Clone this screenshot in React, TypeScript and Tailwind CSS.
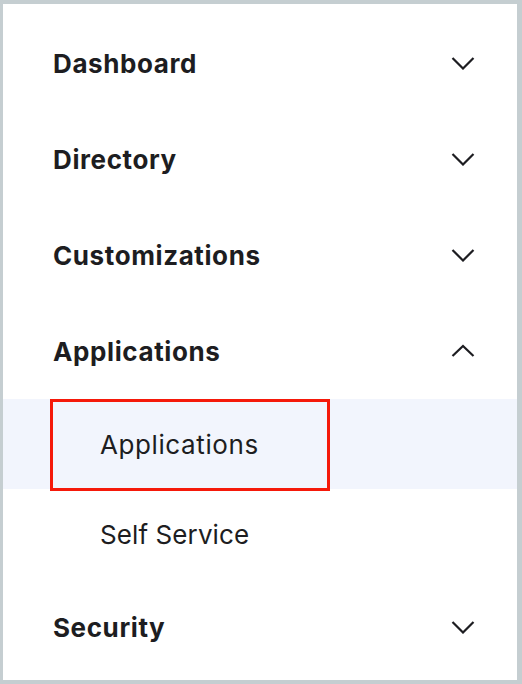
import React from "react";

const font = { fontFamily: "Inter, 'Noto Sans', sans-serif" };

function Chevron({ up = false }: { up?: boolean }) {
  return (
    <svg width="24" height="14" viewBox="0 0 24 14" fill="none" className="shrink-0">
      <polyline
        points={up ? "1.5,12 12,2 22.5,12" : "1.5,2 12,12.5 22.5,2"}
        stroke="#1d1d21"
        strokeWidth="2.2"
        strokeLinecap="butt"
        strokeLinejoin="miter"
      />
    </svg>
  );
}

function Section({ label, open = false }: { label: string; open?: boolean }) {
  return (
    <div className="flex h-[96px] items-center justify-between pl-[50px] pr-[42px]">
      <span className="text-[26px] font-bold tracking-[0.6px] text-[#1d1d21]">{label}</span>
      <Chevron up={open} />
    </div>
  );
}

export default function App() {
  return (
    <div style={font} className="h-[684px] w-[522px] bg-[#c5ced1] pt-[4px] pb-[4px] pl-[3px] pr-[5px]">
      <div className="h-full bg-white pt-[11px]">
        <Section label="Dashboard" />
        <Section label="Directory" />
        <Section label="Customizations" />
        <Section label="Applications" open />
        <div className="relative flex h-[90px] items-center bg-[#f2f5fd] pl-[97px]">
          <span className="text-[26px] tracking-[0.6px] text-[#1d1d21]">Applications</span>
          <div className="absolute left-[47px] top-0 h-[92px] w-[280px] border-[3px] border-[#f5190a]" />
        </div>
        <div className="flex h-[90px] items-center pl-[97px]">
          <span className="text-[26px] tracking-[0.1px] text-[#1d1d21]">Self Service</span>
        </div>
        <Section label="Security" />
      </div>
    </div>
  );
}
